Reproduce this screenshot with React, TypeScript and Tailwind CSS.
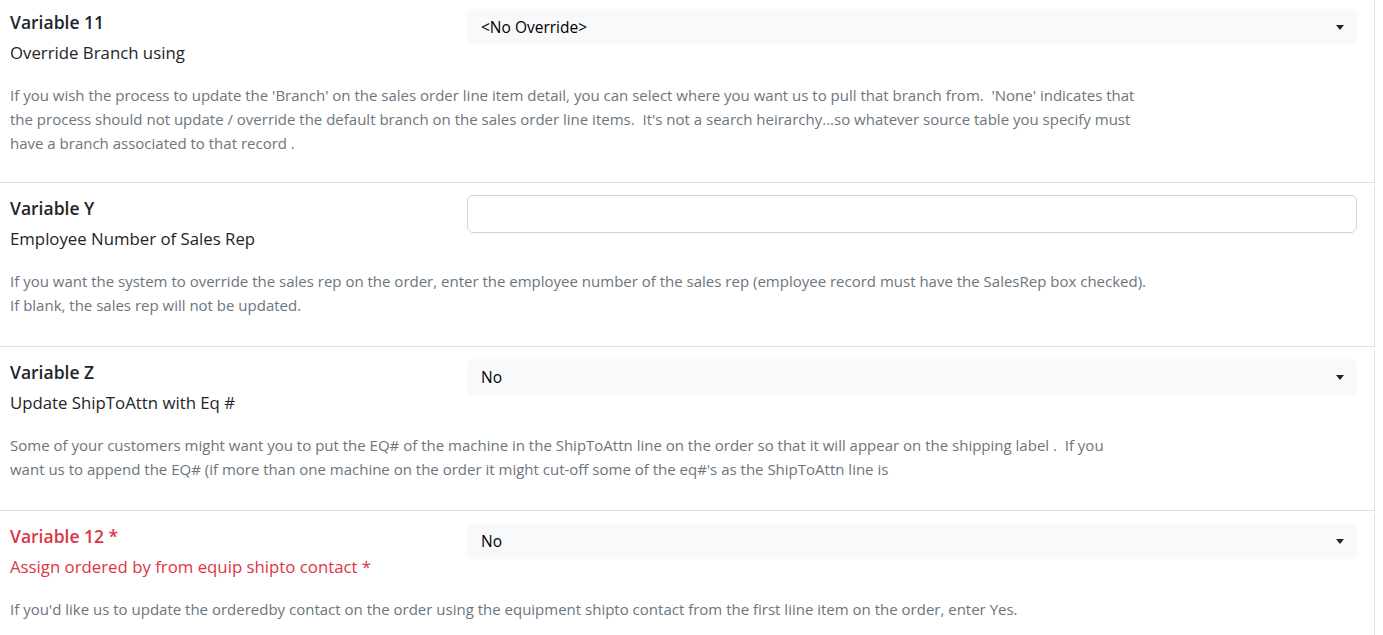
type Field = {
  title: string;
  subtitle: string;
  required?: boolean;
  control: "select" | "input";
  value?: string;
  desc: string[];
};

const fields: Field[] = [
  {
    title: "Variable 11",
    subtitle: "Override Branch using",
    control: "select",
    value: "<No Override>",
    desc: [
      "If you wish the process to update the 'Branch' on the sales order line item detail, you can select where you want us to pull that branch from.  'None' indicates that the process should not update / override the default branch on the sales order line items.  It's not a search heirarchy...so whatever source table you specify must have a branch associated to that record .",
    ],
  },
  {
    title: "Variable Y",
    subtitle: "Employee Number of Sales Rep",
    control: "input",
    desc: [
      "If you want the system to override the sales rep on the order, enter the employee number of the sales rep (employee record must have the SalesRep box checked).",
      "If blank, the sales rep will not be updated.",
    ],
  },
  {
    title: "Variable Z",
    subtitle: "Update ShipToAttn with Eq #",
    control: "select",
    value: "No",
    desc: [
      "Some of your customers might want you to put the EQ# of the machine in the ShipToAttn line on the order so that it will appear on the shipping label .  If you want us to append the EQ# (if more than one machine on the order it might cut-off some of the eq#'s as the ShipToAttn line is",
    ],
  },
  {
    title: "Variable 12 *",
    subtitle: "Assign ordered by from equip shipto contact *",
    required: true,
    control: "select",
    value: "No",
    desc: [
      "If you'd like us to update the orderedby contact on the order using the equipment shipto contact from the first liine item on the order, enter Yes.",
    ],
  },
];

function Caret() {
  return (
    <svg width="8" height="5" viewBox="0 0 8 5" className="shrink-0">
      <path d="M0 0 L8 0 L4 5 Z" fill="#212529" />
    </svg>
  );
}

export default function App() {
  return (
    <div
      className="w-[1383px] bg-white text-[#212529]"
      style={{ fontFamily: "'Open Sans', 'Noto Sans', sans-serif" }}
    >
      {fields.map((f, i) => (
        <section
          key={i}
          className="mb-[3px] w-[1375px] border-r border-b border-[#dee2e6] pt-[9px] pr-[17px] pb-[29px] pl-[10px] first:pb-[27px]"
        >
          <div className="flex items-start">
            <div className={`w-[457px] shrink-0 ${f.required ? "text-[#dc3545]" : "text-[#212529]"}`}>
              <div className="text-[17.5px] font-semibold leading-[26px]">{f.title}</div>
              <div className="mt-[5px] text-[16.8px] leading-[25px]">{f.subtitle}</div>
            </div>
            {f.control === "select" ? (
              <div className="flex h-[36px] flex-1 items-center justify-between rounded-[6px] bg-[#f8f9fa] pr-[13px] pl-[14px]">
                <span className="translate-y-[1px] text-[15.5px] text-black">{f.value}</span>
                <Caret />
              </div>
            ) : (
              <div className="h-[38px] flex-1 rounded-[6px] border border-[#ced4da] bg-white" />
            )}
          </div>
          <div className="mt-[18px] w-[1128px] text-[15px] leading-[24px] text-[#6c757d]">
            {f.desc.length > 1 ? (
              f.desc.map((d, j) => (
                <p key={j} className="whitespace-nowrap">
                  {d}
                </p>
              ))
            ) : (
              <p className="whitespace-pre-wrap">{f.desc[0]}</p>
            )}
          </div>
        </section>
      ))}
    </div>
  );
}
